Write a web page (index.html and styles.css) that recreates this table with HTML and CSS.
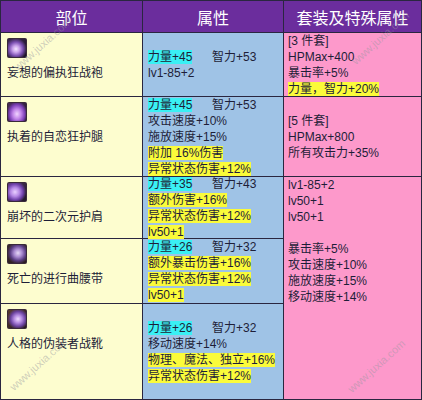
FILE: index.html
```html
<!DOCTYPE html>
<html lang="zh">
<head>
<meta charset="utf-8">
<link rel="stylesheet" href="styles.css">
</head>
<body>
<div class="table">
  <div class="th">部位</div>
  <div class="th">属性</div>
  <div class="th">套装及特殊属性</div>

  <div class="part">
    <div class="icon icon-a"></div>
    <div class="name">妄想的偏执狂战袍</div>
  </div>
  <div class="attr">
    <div><span class="first"><span class="cy">力量+45</span></span>智力+53</div>
    <div>lv1-85+2</div>
  </div>
  <div class="set">
    <div>[3 件套]</div>
    <div>HPMax+400</div>
    <div>暴击率+5%</div>
    <div><span class="ye">力量，智力+20%</span></div>
  </div>

  <div class="part">
    <div class="icon icon-b"></div>
    <div class="name">执着的自恋狂护腿</div>
  </div>
  <div class="attr">
    <div><span class="first"><span class="cy">力量+45</span></span>智力+53</div>
    <div>攻击速度+10%</div>
    <div>施放速度+15%</div>
    <div><span class="ye">附加 16%伤害</span></div>
    <div><span class="ye">异常状态伤害+12%</span></div>
  </div>
  <div class="set">
    <div>[5 件套]</div>
    <div>HPMax+800</div>
    <div>所有攻击力+35%</div>
  </div>

  <div class="part">
    <div class="icon icon-c"></div>
    <div class="name">崩坏的二次元护肩</div>
  </div>
  <div class="attr">
    <div><span class="first"><span class="cy">力量+35</span></span>智力+43</div>
    <div><span class="ye">额外伤害+16%</span></div>
    <div><span class="ye">异常状态伤害+12%</span></div>
    <div><span class="ye">lv50+1</span></div>
  </div>
  <div class="set set-merged">
    <div>lv1-85+2</div>
    <div>lv50+1</div>
    <div>lv50+1</div>
    <div class="blank"></div>
    <div>暴击率+5%</div>
    <div>攻击速度+10%</div>
    <div>施放速度+15%</div>
    <div>移动速度+14%</div>
  </div>

  <div class="part">
    <div class="icon icon-d"></div>
    <div class="name">死亡的进行曲腰带</div>
  </div>
  <div class="attr">
    <div><span class="first"><span class="cy">力量+26</span></span>智力+32</div>
    <div><span class="ye">额外暴击伤害+16%</span></div>
    <div><span class="ye">异常状态伤害+12%</span></div>
    <div><span class="ye">lv50+1</span></div>
  </div>

  <div class="part">
    <div class="icon icon-e"></div>
    <div class="name">人格的伪装者战靴</div>
  </div>
  <div class="attr">
    <div><span class="first"><span class="cy">力量+26</span></span>智力+32</div>
    <div>移动速度+14%</div>
    <div><span class="ye">物理、魔法、独立+16%</span></div>
    <div><span class="ye">异常状态伤害+12%</span></div>
  </div>

  <div class="wm wm-1">www.juxia.com</div>
  <div class="wm wm-2">www.juxia.com</div>
  <div class="wm wm-3">www.juxia.com</div>
  <div class="wm wm-4">www.juxia.com</div>
</div>
</body>
</html>
```

FILE: styles.css
```css
html, body {
  margin: 0;
  padding: 0;
  background: #ffffff;
}

.table {
  position: relative;
  width: 420px;
  height: 398px;
  padding: 1px;
  display: grid;
  grid-template-columns: 141px 140px 137px;
  grid-template-rows: 31px 63px 79px 61px 64px 95px;
  gap: 1px;
  background: #2a2640;
  overflow: hidden;
  font-family: "Liberation Sans", "Noto Sans CJK SC", sans-serif;
  font-size: 12px;
  line-height: 16px;
  color: #1e1e38;
}

.th {
  background: #6b2d9d;
  color: #ffffff;
  font-family: "Noto Sans CJK SC", sans-serif;
  font-size: 16px;
  display: flex;
  align-items: center;
  justify-content: center;
}

.part {
  background: #fdfdcf;
  padding: 5px 6px 0;
  display: flex;
  flex-direction: column;
  gap: 7px;
}

.name {
  white-space: nowrap;
}

.icon {
  width: 20px;
  height: 20px;
  border-radius: 2px;
  box-shadow: inset 0 0 0 1px #3a2a3a;
  background:
    radial-gradient(circle at 45% 55%, #f4e6ff 0, #c9a2ea 22%, #7a4fb0 45%, rgba(40,20,60,0) 70%),
    linear-gradient(135deg, #3b2850, #1c1426);
}

.icon-b {
  background:
    radial-gradient(ellipse at 50% 60%, #f0d4ff 0, #c184e8 30%, #7b3fb5 55%, rgba(40,20,60,0) 75%),
    linear-gradient(135deg, #4a2d5c, #201626);
}

.icon-c {
  background:
    radial-gradient(circle at 40% 50%, #e9d0ff 0, #b78ae6 28%, #6d3fa8 52%, rgba(40,20,60,0) 72%),
    linear-gradient(135deg, #52385e, #1e1628);
}

.icon-d {
  background:
    radial-gradient(ellipse at 55% 45%, #e6d8f6 0, #a98ad0 26%, #5a3d84 50%, rgba(40,20,60,0) 72%),
    linear-gradient(135deg, #3a2c2a, #2a1a20);
}

.icon-e {
  background:
    radial-gradient(circle at 55% 50%, #efdcff 0, #b48ae0 26%, #6a429e 50%, rgba(40,20,60,0) 72%),
    linear-gradient(135deg, #5a3c30, #22161c);
}

.attr {
  background: #9fc3e6;
  padding-left: 5px;
  display: flex;
  flex-direction: column;
  justify-content: center;
  white-space: nowrap;
}

.first {
  display: inline-block;
  width: 64px;
}

.cy {
  background: #3af0f4;
}

.ye {
  background: #fbfb3a;
}

.set {
  background: #fd99cb;
  padding-left: 4px;
  display: flex;
  flex-direction: column;
  justify-content: center;
  white-space: nowrap;
}

.set-merged {
  grid-column: 3;
  grid-row: 4 / 7;
  justify-content: flex-start;
}

.blank {
  height: 16px;
}

.wm {
  position: absolute;
  font-family: "Liberation Sans", sans-serif;
  font-size: 11px;
  color: rgba(150, 150, 160, 0.45);
  transform: rotate(-42deg);
  white-space: nowrap;
  pointer-events: none;
}

.wm-1 { left: 6px; top: 36px; }
.wm-2 { left: 344px; top: 30px; }
.wm-3 { left: 2px; top: 356px; }
.wm-4 { left: 340px; top: 358px; }
```
